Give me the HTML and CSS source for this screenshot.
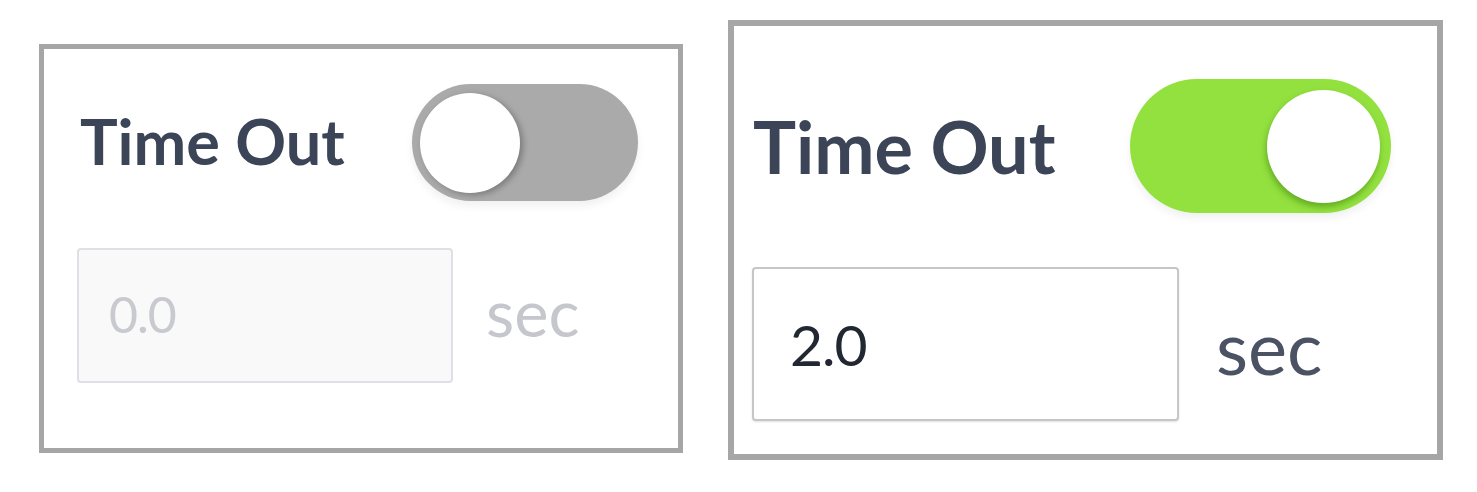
FILE: index.html
```html
<!DOCTYPE html>
<html lang="en">
<head>
<meta charset="utf-8">
<title>Time Out</title>
<link rel="stylesheet" href="styles.css">
</head>
<body>
<div class="stage">
  <section class="panel panel--off">
    <div class="header">
      <span class="title">Time Out</span>
      <button class="toggle" aria-pressed="false"><span class="knob"></span></button>
    </div>
    <div class="field">
      <input class="input" type="text" value="0.0" disabled>
      <span class="unit">sec</span>
    </div>
  </section>
  <section class="panel panel--on">
    <div class="header">
      <span class="title">Time Out</span>
      <button class="toggle toggle--on" aria-pressed="true"><span class="knob"></span></button>
    </div>
    <div class="field">
      <input class="input" type="text" value="2.0">
      <span class="unit">sec</span>
    </div>
  </section>
</div>
</body>
</html>
```
FILE: styles.css
```css
* { box-sizing: border-box; }
html, body { margin: 0; padding: 0; background: #ffffff; }
body { font-family: "Lato", "Source Sans Pro", "Open Sans", sans-serif; }

.stage {
  display: flex;
  align-items: flex-start;
  gap: 45px;
  padding: 20px 0 0 39px;
  width: 1477px;
  height: 492px;
}

.panel {
  display: flex;
  flex-direction: column;
  background: #fff;
  border: 5px solid #a6a6a6;
}

.header {
  display: flex;
  align-items: center;
  justify-content: space-between;
}

.title {
  font-weight: 700;
  color: #3b4557;
  line-height: 1;
}

.toggle {
  position: relative;
  display: flex;
  align-items: center;
  padding: 0;
  border: none;
  border-radius: 999px;
  background: #aaaaaa;
  box-shadow: 0 5px 8px rgba(0, 0, 0, 0.06);
  cursor: pointer;
}

.knob {
  display: block;
  border-radius: 50%;
  background: #ffffff;
}

.toggle--on {
  justify-content: flex-end;
  background: #93e13f;
}

.field {
  display: flex;
  align-items: center;
}

.input {
  font-family: "Lato", "Source Sans Pro", "Open Sans", sans-serif;
  border-radius: 4px;
  outline: none;
  line-height: 1;
}

.unit {
  line-height: 1;
}

/* ----- off state (left) ----- */
.panel--off {
  width: 644px;
  height: 409px;
  margin-top: 24px;
  padding: 35px 40px 0 33px;
}
.panel--off .title { font-size: 63px; margin-left: 3px; margin-top: -4px; }
.panel--off .toggle { width: 226px; height: 117px; padding: 0 8px; }
.panel--off .knob {
  width: 100px; height: 100px;
  box-shadow: 3px 2px 6px rgba(0, 0, 0, 0.28);
}
.panel--off .field { margin-top: 47px; gap: 33px; }
.panel--off .input {
  width: 376px;
  height: 135px;
  padding: 0 0 4px 30px;
  font-size: 50px;
  letter-spacing: -1px;
  border: 2px solid #dfe0e5;
  background: #f9f9f9;
  color: #c8cad0;
  -webkit-text-fill-color: #c8cad0;
  opacity: 1;
}
.panel--off .unit { font-size: 65px; color: #c5c7cd; margin-top: -6px; }

/* ----- on state (right) ----- */
.panel--on {
  width: 715px;
  height: 440px;
  border-width: 6px;
  padding: 53px 46px 0 18px;
}
.panel--on .title { font-size: 72px; margin-left: 1px; }
.panel--on .toggle { width: 261px; height: 134px; padding: 0 11px; }
.panel--on .knob {
  width: 113px; height: 113px;
  box-shadow: -1px 4px 6px rgba(60, 130, 10, 0.55);
}
.panel--on .field { margin-top: 54px; gap: 37px; }
.panel--on .input {
  width: 427px;
  height: 154px;
  padding: 0 0 0 36px;
  font-size: 57px;
  letter-spacing: -1px;
  border: 2px solid #c6c6c6;
  box-shadow: 0 1px 2px rgba(0, 0, 0, 0.12);
  background: #ffffff;
  color: #222831;
}
.panel--on .unit { font-size: 74px; color: #4a5264; margin-top: 6px; }
```
